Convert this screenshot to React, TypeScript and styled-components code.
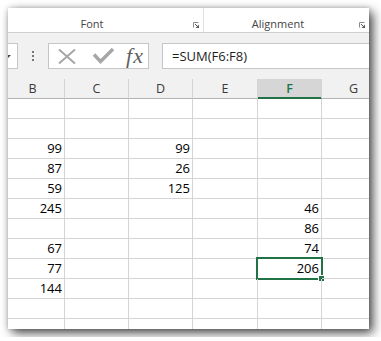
import styled, { createGlobalStyle } from 'styled-components'

const colors = {
  green: '#217346',
  grid: '#d4d4d4',
  bar: '#f1f1f1',
  boxBorder: '#c6c6c6',
  label: '#444444',
  icon: '#a6a6a6',
}

const columns = [
  { name: 'B', width: 63 },
  { name: 'C', width: 63 },
  { name: 'D', width: 63 },
  { name: 'E', width: 64 },
  { name: 'F', width: 63 },
  { name: 'G', width: 63 },
]

const rows: Record<string, string>[] = [
  {},
  {},
  { B: '99', D: '99' },
  { B: '87', D: '26' },
  { B: '59', D: '125' },
  { B: '245', F: '46' },
  { F: '86' },
  { B: '67', F: '74' },
  { B: '77', F: '206' },
  { B: '144' },
  {},
  {},
]

const selected = { col: 'F', row: 8 }

const GlobalStyle = createGlobalStyle`
  html, body {
    margin: 0;
    padding: 0;
    background: #ffffff;
  }
  body {
    font-family: 'Open Sans', 'Noto Sans', sans-serif;
  }
`

const Launcher = () => (
  <LauncherIcon width="6" height="6" viewBox="0 0 6 6">
    <path d="M0.5 5.5V0.5H5.5" fill="none" stroke="#8a8a8a" strokeWidth="1" />
    <path d="M2 2L4.5 4.5" stroke="#5a5a5a" strokeWidth="1" />
    <polygon points="6,2.5 6,6 2.5,6" fill="#5a5a5a" />
  </LauncherIcon>
)

const CancelIcon = () => (
  <svg width="18" height="15" viewBox="0 0 18 15">
    <path d="M1 0.5L17 14.5M17 0.5L1 14.5" stroke={colors.icon} strokeWidth="2" fill="none" />
  </svg>
)

const EnterIcon = () => (
  <svg width="21" height="17" viewBox="0 0 21 17">
    <path d="M1 6.5L7.5 13.5L20 1" stroke={colors.icon} strokeWidth="3.4" fill="none" />
  </svg>
)

export default function App() {
  return (
    <>
      <GlobalStyle />
      <Window>
        <Ribbon>
          <Group $first>
            <GroupLabel>Font</GroupLabel>
            <Launcher />
          </Group>
          <Group>
            <GroupLabel>Alignment</GroupLabel>
            <Launcher />
          </Group>
        </Ribbon>

        <FormulaBar>
          <NameBox>
            <DropArrow />
          </NameBox>
          <Grip>
            <Dot />
            <Dot />
            <Dot />
          </Grip>
          <ButtonsBox>
            <ToolButton $width={35}>
              <CancelIcon />
            </ToolButton>
            <ToolButton $width={38}>
              <EnterIcon />
            </ToolButton>
            <ToolButton $width={26}>
              <Fx>fx</Fx>
            </ToolButton>
          </ButtonsBox>
          <FormulaInput>=SUM(F6:F8)</FormulaInput>
        </FormulaBar>

        <Sheet>
          <HeaderRow>
            {columns.map(({ name, width }) => (
              <HeaderCell key={name} $width={width} $active={name === selected.col}>
                {name}
              </HeaderCell>
            ))}
          </HeaderRow>
          {rows.map((row, i) => (
            <Row key={i}>
              {columns.map(({ name, width }) => (
                <Cell key={name} $width={width}>
                  {row[name]}
                  {name === selected.col && i === selected.row && (
                    <Selection>
                      <FillHandle />
                    </Selection>
                  )}
                </Cell>
              ))}
            </Row>
          ))}
        </Sheet>
      </Window>
    </>
  )
}

const Window = styled.div`
  margin: 8px;
  width: 361px;
  height: 321px;
  overflow: hidden;
  background: #ffffff;
  box-shadow: 4px 4px 10px rgba(0, 0, 0, 0.7), 0 0 5px rgba(0, 0, 0, 0.2);
  display: flex;
  flex-direction: column;
`

const Ribbon = styled.div`
  height: 24px;
  flex-shrink: 0;
  display: flex;
  background: #ffffff;
  border-bottom: 1px solid #cfcfcf;
`

const Group = styled.div<{ $first?: boolean }>`
  display: flex;
  align-items: flex-start;
  padding-top: 8px;
  box-sizing: border-box;
  ${({ $first }) =>
    $first
      ? `
    margin-left: -10px;
    width: 206px;
    flex-shrink: 0;
    border-right: 1px solid #e1e1e1;
  `
      : `
    flex: 1;
  `}
`

const GroupLabel = styled.div`
  flex: 1;
  text-align: center;
  font-size: 11px;
  line-height: 15px;
  color: ${colors.label};
`

const LauncherIcon = styled.svg`
  flex-shrink: 0;
  margin: 6px 4px 0 7px;
`

const FormulaBar = styled.div`
  height: 26px;
  flex-shrink: 0;
  display: flex;
  padding: 10px 0;
  background: ${colors.bar};
`

const NameBox = styled.div`
  width: 50px;
  margin-left: -40px;
  flex-shrink: 0;
  box-sizing: border-box;
  border: 1px solid ${colors.boxBorder};
  background: #ffffff;
  display: flex;
  align-items: center;
  justify-content: flex-end;
  padding-right: 6px;
`

const DropArrow = styled.span`
  width: 0;
  height: 0;
  border-left: 3px solid transparent;
  border-right: 3px solid transparent;
  border-top: 3px solid #444444;
`

const Grip = styled.div`
  margin-left: 14px;
  width: 2px;
  display: flex;
  flex-direction: column;
  justify-content: center;
  gap: 2px;
`

const Dot = styled.span`
  width: 2px;
  height: 2px;
  background: #777777;
`

const ButtonsBox = styled.div`
  margin-left: 14px;
  width: 101px;
  flex-shrink: 0;
  box-sizing: border-box;
  border: 1px solid ${colors.boxBorder};
  background: #ffffff;
  display: flex;
  align-items: center;
`

const ToolButton = styled.div<{ $width: number }>`
  width: ${({ $width }) => $width}px;
  height: 100%;
  display: flex;
  align-items: center;
  justify-content: center;
`

const Fx = styled.span`
  font-family: 'Liberation Serif', serif;
  font-style: italic;
  font-size: 22px;
  letter-spacing: 1px;
  color: #5f5f5f;
  line-height: 22px;
`

const FormulaInput = styled.div`
  flex: 1;
  margin-left: 13px;
  margin-right: -4px;
  box-sizing: border-box;
  border: 1px solid ${colors.boxBorder};
  background: #ffffff;
  padding-left: 9px;
  font-size: 13px;
  line-height: 24px;
  color: #1e1e1e;
`

const Sheet = styled.div`
  margin-left: -7px;
  display: flex;
  flex-direction: column;
`

const HeaderRow = styled.div`
  display: flex;
  background: ${colors.bar};
`

const HeaderCell = styled.div<{ $width: number; $active: boolean }>`
  width: ${({ $width }) => $width}px;
  height: 19px;
  flex-shrink: 0;
  border-right: 1px solid ${colors.grid};
  border-bottom: 1px solid ${({ $active }) => ($active ? colors.green : '#b4b4b4')};
  box-shadow: ${({ $active }) => ($active ? `inset 0 -1px 0 ${colors.green}` : 'none')};
  background: ${({ $active }) => ($active ? '#d6d6d6' : 'transparent')};
  color: ${({ $active }) => ($active ? colors.green : '#3a3a3a')};
  font-weight: ${({ $active }) => ($active ? 600 : 400)};
  font-size: 12.5px;
  line-height: 19px;
  text-align: center;
`

const Row = styled.div`
  display: flex;
`

const Cell = styled.div<{ $width: number }>`
  position: relative;
  width: ${({ $width }) => $width + 1}px;
  height: 20px;
  flex-shrink: 0;
  box-sizing: border-box;
  border-right: 1px solid ${colors.grid};
  border-bottom: 1px solid ${colors.grid};
  padding-right: 2px;
  text-align: right;
  font-size: 13px;
  line-height: 18px;
  color: #000000;
`

const Selection = styled.div`
  position: absolute;
  inset: -2px;
  border: 2px solid ${colors.green};
`

const FillHandle = styled.span`
  position: absolute;
  right: -3px;
  bottom: -3px;
  width: 5px;
  height: 5px;
  background: ${colors.green};
  box-shadow: 0 0 0 1px #ffffff;
`
